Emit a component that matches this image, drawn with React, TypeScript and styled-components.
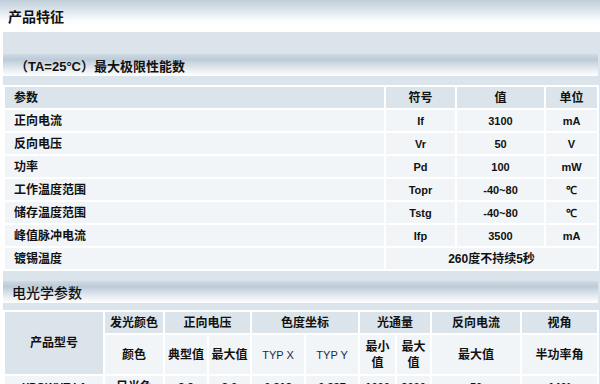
import styled, { createGlobalStyle } from "styled-components";

const GlobalStyle = createGlobalStyle`
  html, body {
    margin: 0;
    padding: 0;
    background: #fff;
  }
  body {
    font-family: "Liberation Sans", "Noto Sans CJK SC", sans-serif;
    color: #111;
    overflow: hidden;
  }
`;

const limits = [
  { name: "正向电流", symbol: "If", value: "3100", unit: "mA" },
  { name: "反向电压", symbol: "Vr", value: "50", unit: "V" },
  { name: "功率", symbol: "Pd", value: "100", unit: "mW" },
  { name: "工作温度范围", symbol: "Topr", value: "-40~80", unit: "℃" },
  { name: "储存温度范围", symbol: "Tstg", value: "-40~80", unit: "℃" },
  { name: "峰值脉冲电流", symbol: "Ifp", value: "3500", unit: "mA" },
];

const opticalCols = [98, 58, 42, 41, 52, 52, 35, 33, 88, 75];
const opticalRow = ["XPGWHT-L1", "日光色", "3.2", "3.6", "0.312", "0.327", "1000", "2000", "50", "140°"];

export default function App() {
  return (
    <Page>
      <GlobalStyle />
      <TitleBar>产品特征</TitleBar>

      <Panel>
        <SectionBar>（TA=25°C）最大极限性能数</SectionBar>

        <LimitTable>
          <colgroup>
            <col style={{ width: 379 }} />
            <col style={{ width: 69 }} />
            <col style={{ width: 87 }} />
            <col style={{ width: 51 }} />
          </colgroup>
          <tbody>
            <tr>
              <Cell $head $left>参数</Cell>
              <Cell $head>符号</Cell>
              <Cell $head>值</Cell>
              <Cell $head>单位</Cell>
            </tr>
            {limits.map((row) => (
              <tr key={row.name}>
                <Cell $left>{row.name}</Cell>
                <Cell $latin>{row.symbol}</Cell>
                <Cell $latin>{row.value}</Cell>
                <Cell $latin>{row.unit}</Cell>
              </tr>
            ))}
            <tr>
              <Cell $left>镀锡温度</Cell>
              <Cell colSpan={3}>260度不持续5秒</Cell>
            </tr>
          </tbody>
        </LimitTable>

        <SectionBar $plain>电光学参数</SectionBar>

        <OpticalTable>
          <colgroup>
            {opticalCols.map((w, i) => (
              <col key={i} style={{ width: w }} />
            ))}
          </colgroup>
          <tbody>
            <tr>
              <Cell $head rowSpan={2}>产品型号</Cell>
              <Cell $head>发光颜色</Cell>
              <Cell $head colSpan={2}>正向电压</Cell>
              <Cell $head colSpan={2}>色度坐标</Cell>
              <Cell $head colSpan={2}>光通量</Cell>
              <Cell $head>反向电流</Cell>
              <Cell $head>视角</Cell>
            </tr>
            <SubRow>
              <Cell>颜色</Cell>
              <Cell>典型值</Cell>
              <Cell>最大值</Cell>
              <Cell $latin $thin>TYP X</Cell>
              <Cell $latin $thin>TYP Y</Cell>
              <Cell $narrow>最小值</Cell>
              <Cell $narrow>最大值</Cell>
              <Cell>最大值</Cell>
              <Cell>半功率角</Cell>
            </SubRow>
            <tr>
              {opticalRow.map((v, i) => (
                <Cell key={i} $latin={i !== 1}>{v}</Cell>
              ))}
            </tr>
          </tbody>
        </OpticalTable>
      </Panel>
    </Page>
  );
}

const Page = styled.div`
  width: 600px;
  height: 384px;
  overflow: hidden;
`;

const TitleBar = styled.h2`
  margin: 0;
  height: 31px;
  box-sizing: border-box;
  padding: 1px 0 0 8px;

  display: flex;
  align-items: center;

  font-family: "Noto Sans CJK SC", sans-serif;
  font-size: 14px;
  font-weight: bold;
  color: #111;
  background: linear-gradient(to bottom, #c1ceda 0px, #d3dde6 7px, #f4f7f9 18px, #fff 24px);
`;

const Panel = styled.section`
  margin-left: 3px;
  padding-top: 22px;
  background: #dbe4ea;
  border-top: 1px solid #fff;
`;

const SectionBar = styled.h3<{ $plain?: boolean }>`
  margin: 0 2px 0 0;
  height: 22px;
  box-sizing: border-box;
  padding: 0 0 ${(p) => (p.$plain ? "2px" : "1px")} ${(p) => (p.$plain ? "9px" : "12px")};

  display: flex;
  align-items: flex-end;

  font-size: ${(p) => (p.$plain ? "14px" : "13px")};
  font-weight: ${(p) => (p.$plain ? 500 : "bold")};
  line-height: 16px;
  color: #111;
  background: linear-gradient(to bottom, #cfdae3 0%, #bccbd8 25%, #e6ecf1 70%, #fff 100%);
`;

const DataTable = styled.table`
  width: 596px;
  table-layout: fixed;
  border-collapse: separate;
  border-spacing: 2px;
  background: #fff;
`;

const LimitTable = styled(DataTable)`
  margin-top: 9px;
  margin-bottom: 10px;

  td {
    height: 21px;
  }
`;

const OpticalTable = styled(DataTable)`
  margin-top: 7px;

  td {
    height: 21px;
  }
`;

const SubRow = styled.tr`
  td {
    height: 39px;
  }
`;

const Cell = styled.td<{
  $head?: boolean;
  $left?: boolean;
  $latin?: boolean;
  $thin?: boolean;
  $narrow?: boolean;
}>`
  padding: ${(p) => (p.$left ? "0 0 0 9px" : p.$narrow ? "0 4px" : "0")};
  text-align: ${(p) => (p.$left ? "left" : "center")};
  vertical-align: middle;
  box-sizing: border-box;

  font-family: ${(p) =>
    p.$latin ? '"Liberation Sans", sans-serif' : '"Liberation Sans", "Noto Sans CJK SC", sans-serif'};
  font-size: ${(p) => (p.$latin ? "11px" : "12px")};
  font-weight: ${(p) => (p.$thin ? "normal" : "bold")};
  line-height: 16px;
  color: ${(p) => (p.$thin ? "#1c2a44" : "#111")};

  background: ${(p) => (p.$head ? "#dbe4eb" : "#f1f5f8")};
`;
